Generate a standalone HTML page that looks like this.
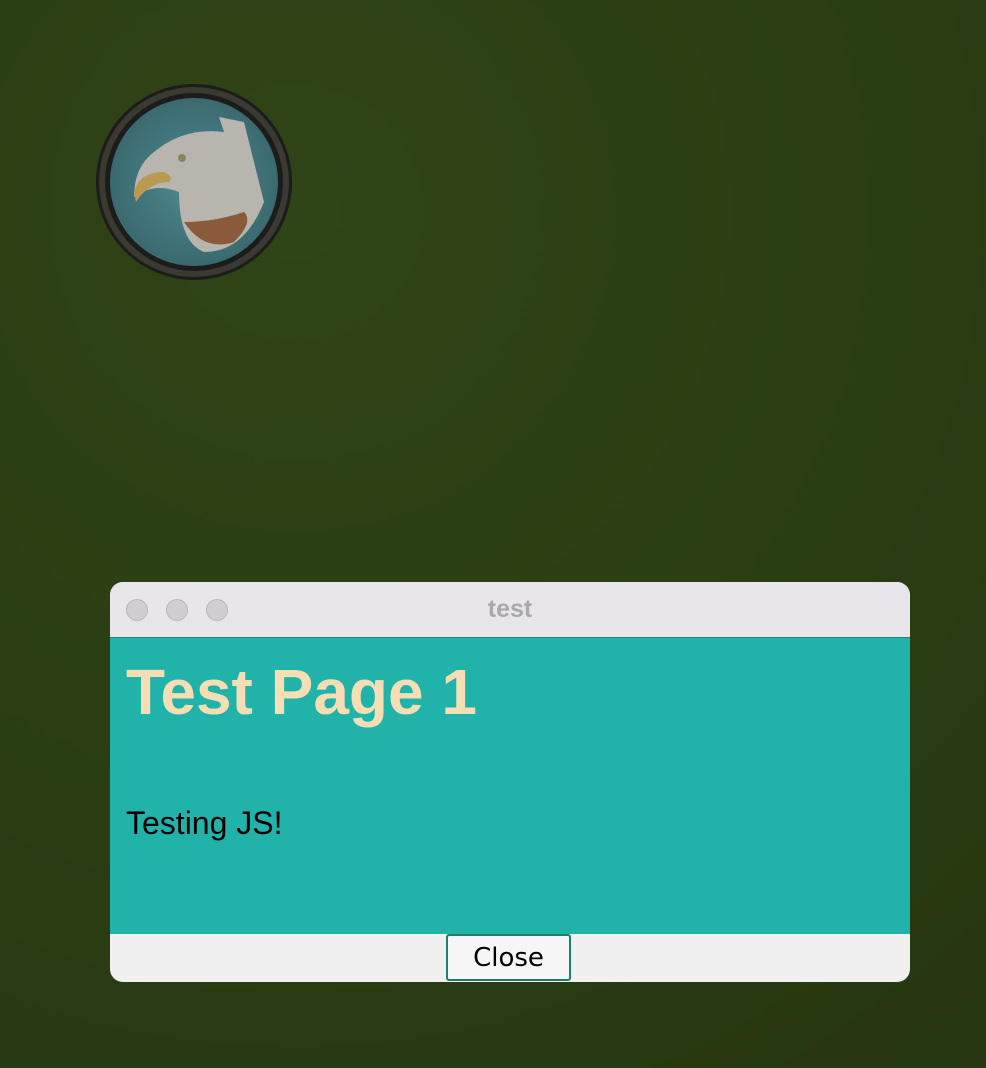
<!DOCTYPE html>
<html><head><meta charset="utf-8"><style>
html,body{margin:0;padding:0;width:986px;height:1068px;overflow:hidden;background:#2b3e14;font-family:"Liberation Sans",sans-serif}
.bg{position:absolute;inset:0;background:radial-gradient(circle at 30% 20%,#2f4417,#2a3d13 60%,#26370f)}
.win{position:absolute;left:110px;top:582px;width:800px;height:400px;border-radius:13px;overflow:hidden;background:#f0f0f0}
.tb{height:55px;background:#e8e6eb;border-bottom:1px solid #14877e;position:relative}
.dot{position:absolute;top:17px;width:22px;height:22px;border-radius:50%;background:#d0ced3;border:1px solid #b8b6bb;box-sizing:border-box}
.title{position:absolute;left:0;right:0;top:13px;text-align:center;font-weight:bold;font-size:25px;color:#a9a8ad}
.content{height:296px;background:#21b2aa;position:relative}
h1{margin:0;position:absolute;left:16px;top:17px;font-size:64px;color:#f5deb3;font-weight:bold}
.p{position:absolute;left:16px;top:167px;font-size:32px;color:#000}
.btn{position:absolute;left:336px;top:352px;width:125px;height:47px;box-sizing:border-box;border:2px solid #1e7f6a;border-radius:3px;background:#f6f6f6;font-size:26px;text-align:center;line-height:44px;font-family:"DejaVu Sans","Liberation Sans",sans-serif}
</style></head><body>
<div class="bg"></div>
<svg style="position:absolute;left:94px;top:82px" width="200" height="200" viewBox="0 0 200 200">
<defs><radialGradient id="g" cx="50%" cy="50%" r="50%"><stop offset="0" stop-color="#4f8a90"/><stop offset="1" stop-color="#3a6a70"/></radialGradient></defs>
<circle cx="100" cy="100" r="98" fill="#1c1c1a"/>
<circle cx="100" cy="100" r="92" fill="none" stroke="#3a3a33" stroke-width="6"/>
<circle cx="100" cy="100" r="84" fill="url(#g)"/>
<path d="M60 70 Q90 45 130 50 L125 35 L150 40 Q160 80 170 120 Q150 170 110 170 Q85 160 85 110 Q60 100 40 115 Q40 85 60 70Z" fill="#b8b4ae"/>
<path d="M40 110 Q45 90 70 90 Q80 95 75 100 Q55 100 42 120Z" fill="#b89a50"/>
<path d="M90 140 Q110 170 140 160 Q160 140 150 130 Q120 140 90 140Z" fill="#8a5a3a"/>
<circle cx="88" cy="76" r="4" fill="#8a8660"/>
</svg>
<div class="win">
<div class="tb"><div class="dot" style="left:16px"></div><div class="dot" style="left:56px"></div><div class="dot" style="left:96px"></div><div class="title">test</div></div>
<div class="content"><h1>Test Page 1</h1><div class="p">Testing JS!</div></div>
<div class="btn">Close</div>
</div>
</body></html>
